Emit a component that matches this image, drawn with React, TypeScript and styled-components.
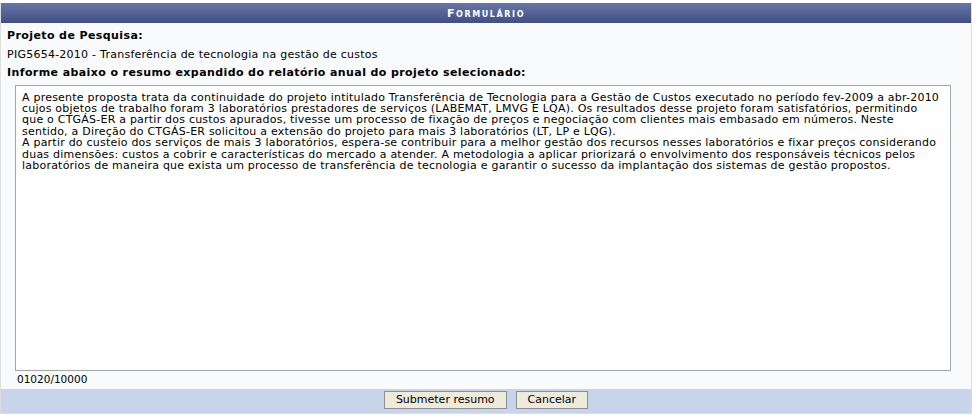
import React from 'react';
import styled, { createGlobalStyle } from 'styled-components';

const GlobalStyle = createGlobalStyle`
  body {
    margin: 0;
    background: #ffffff;
    font-family: "DejaVu Sans", Verdana, sans-serif;
    font-size: 11px;
    color: #000;
  }
`;

const FormTable = styled.div`
  margin-top: 3px;
  border: 1px solid #dddddd;
  border-top: none;
  background: #f9fafc;
`;

const Caption = styled.div`
  height: 20px;
  display: flex;
  align-items: center;
  justify-content: center;
  background: linear-gradient(#6876a6, #404f84);
  color: #ffffff;
  font-weight: bold;
  font-size: 11px;
  font-variant: small-caps;
  letter-spacing: 1.6px;
`;

const Body = styled.div`
  display: flex;
  flex-direction: column;
  padding: 4px 6px 3px 6px;
`;

const Label = styled.div<{ $bold?: boolean }>`
  height: 18.5px;
  line-height: 18.5px;
  font-weight: ${(p) => (p.$bold ? 'bold' : 'normal')};
  letter-spacing: ${(p) => (p.$bold ? '0.4px' : '0.25px')};
  font-size: 11px;
  white-space: nowrap;
`;

const Summary = styled.textarea`
  margin: 2px 14px 0 8px;
  height: 286px;
  box-sizing: border-box;
  padding: 6px 6px;
  border: 1px solid #a5a5a5;
  background: #ffffff;
  font-family: "DejaVu Sans", Verdana, sans-serif;
  font-size: 11px;
  letter-spacing: 0.22px;
  line-height: 11.4px;
  color: #000;
  resize: none;
  overflow: hidden;
  white-space: pre;
  outline: none;
`;

const Counter = styled.div`
  padding: 1px 0 0 10px;
  font-size: 10.5px;
  height: 14px;
  line-height: 14px;
`;

const Footer = styled.div`
  display: flex;
  justify-content: center;
  gap: 9px;
  padding: 2px 0 4px;
  background: #c8d4ea;
`;

const Button = styled.button`
  height: 18px;
  padding: 0 11px;
  border: 1px solid #8e8e8e;
  background: #eeebdd;
  font-family: "DejaVu Sans", Verdana, sans-serif;
  font-size: 11px;
  color: #000;
  cursor: pointer;
`;

const lines = [
  'A presente proposta trata da continuidade do projeto intitulado Transferência de Tecnologia para a Gestão de Custos executado no período fev-2009 a abr-2010',
  'cujos objetos de trabalho foram 3 laboratórios prestadores de serviços (LABEMAT, LMVG E LQA). Os resultados desse projeto foram satisfatórios, permitindo',
  'que o CTGÁS-ER a partir dos custos apurados, tivesse um processo de fixação de preços e negociação com clientes mais embasado em números. Neste',
  'sentido, a Direção do CTGÁS-ER solicitou a extensão do projeto para mais 3 laboratórios (LT, LP e LQG).',
  'A partir do custeio dos serviços de mais 3 laboratórios, espera-se contribuir para a melhor gestão dos recursos nesses laboratórios e fixar preços considerando',
  'duas dimensões: custos a cobrir e características do mercado a atender. A metodologia a aplicar priorizará o envolvimento dos responsáveis técnicos pelos',
  'laboratórios de maneira que exista um processo de transferência de tecnologia e garantir o sucesso da implantação dos sistemas de gestão propostos.',
];

export default function App() {
  return (
    <>
      <GlobalStyle />
      <FormTable>
        <Caption>Formulário</Caption>
        <Body>
          <Label $bold>Projeto de Pesquisa:</Label>
          <Label>PIG5654-2010 - Transferência de tecnologia na gestão de custos</Label>
          <Label $bold>Informe abaixo o resumo expandido do relatório anual do projeto selecionado:</Label>
          <Summary readOnly wrap="off" defaultValue={lines.join('\n')} />
          <Counter>01020/10000</Counter>
        </Body>
        <Footer>
          <Button>Submeter resumo</Button>
          <Button>Cancelar</Button>
        </Footer>
      </FormTable>
    </>
  );
}
